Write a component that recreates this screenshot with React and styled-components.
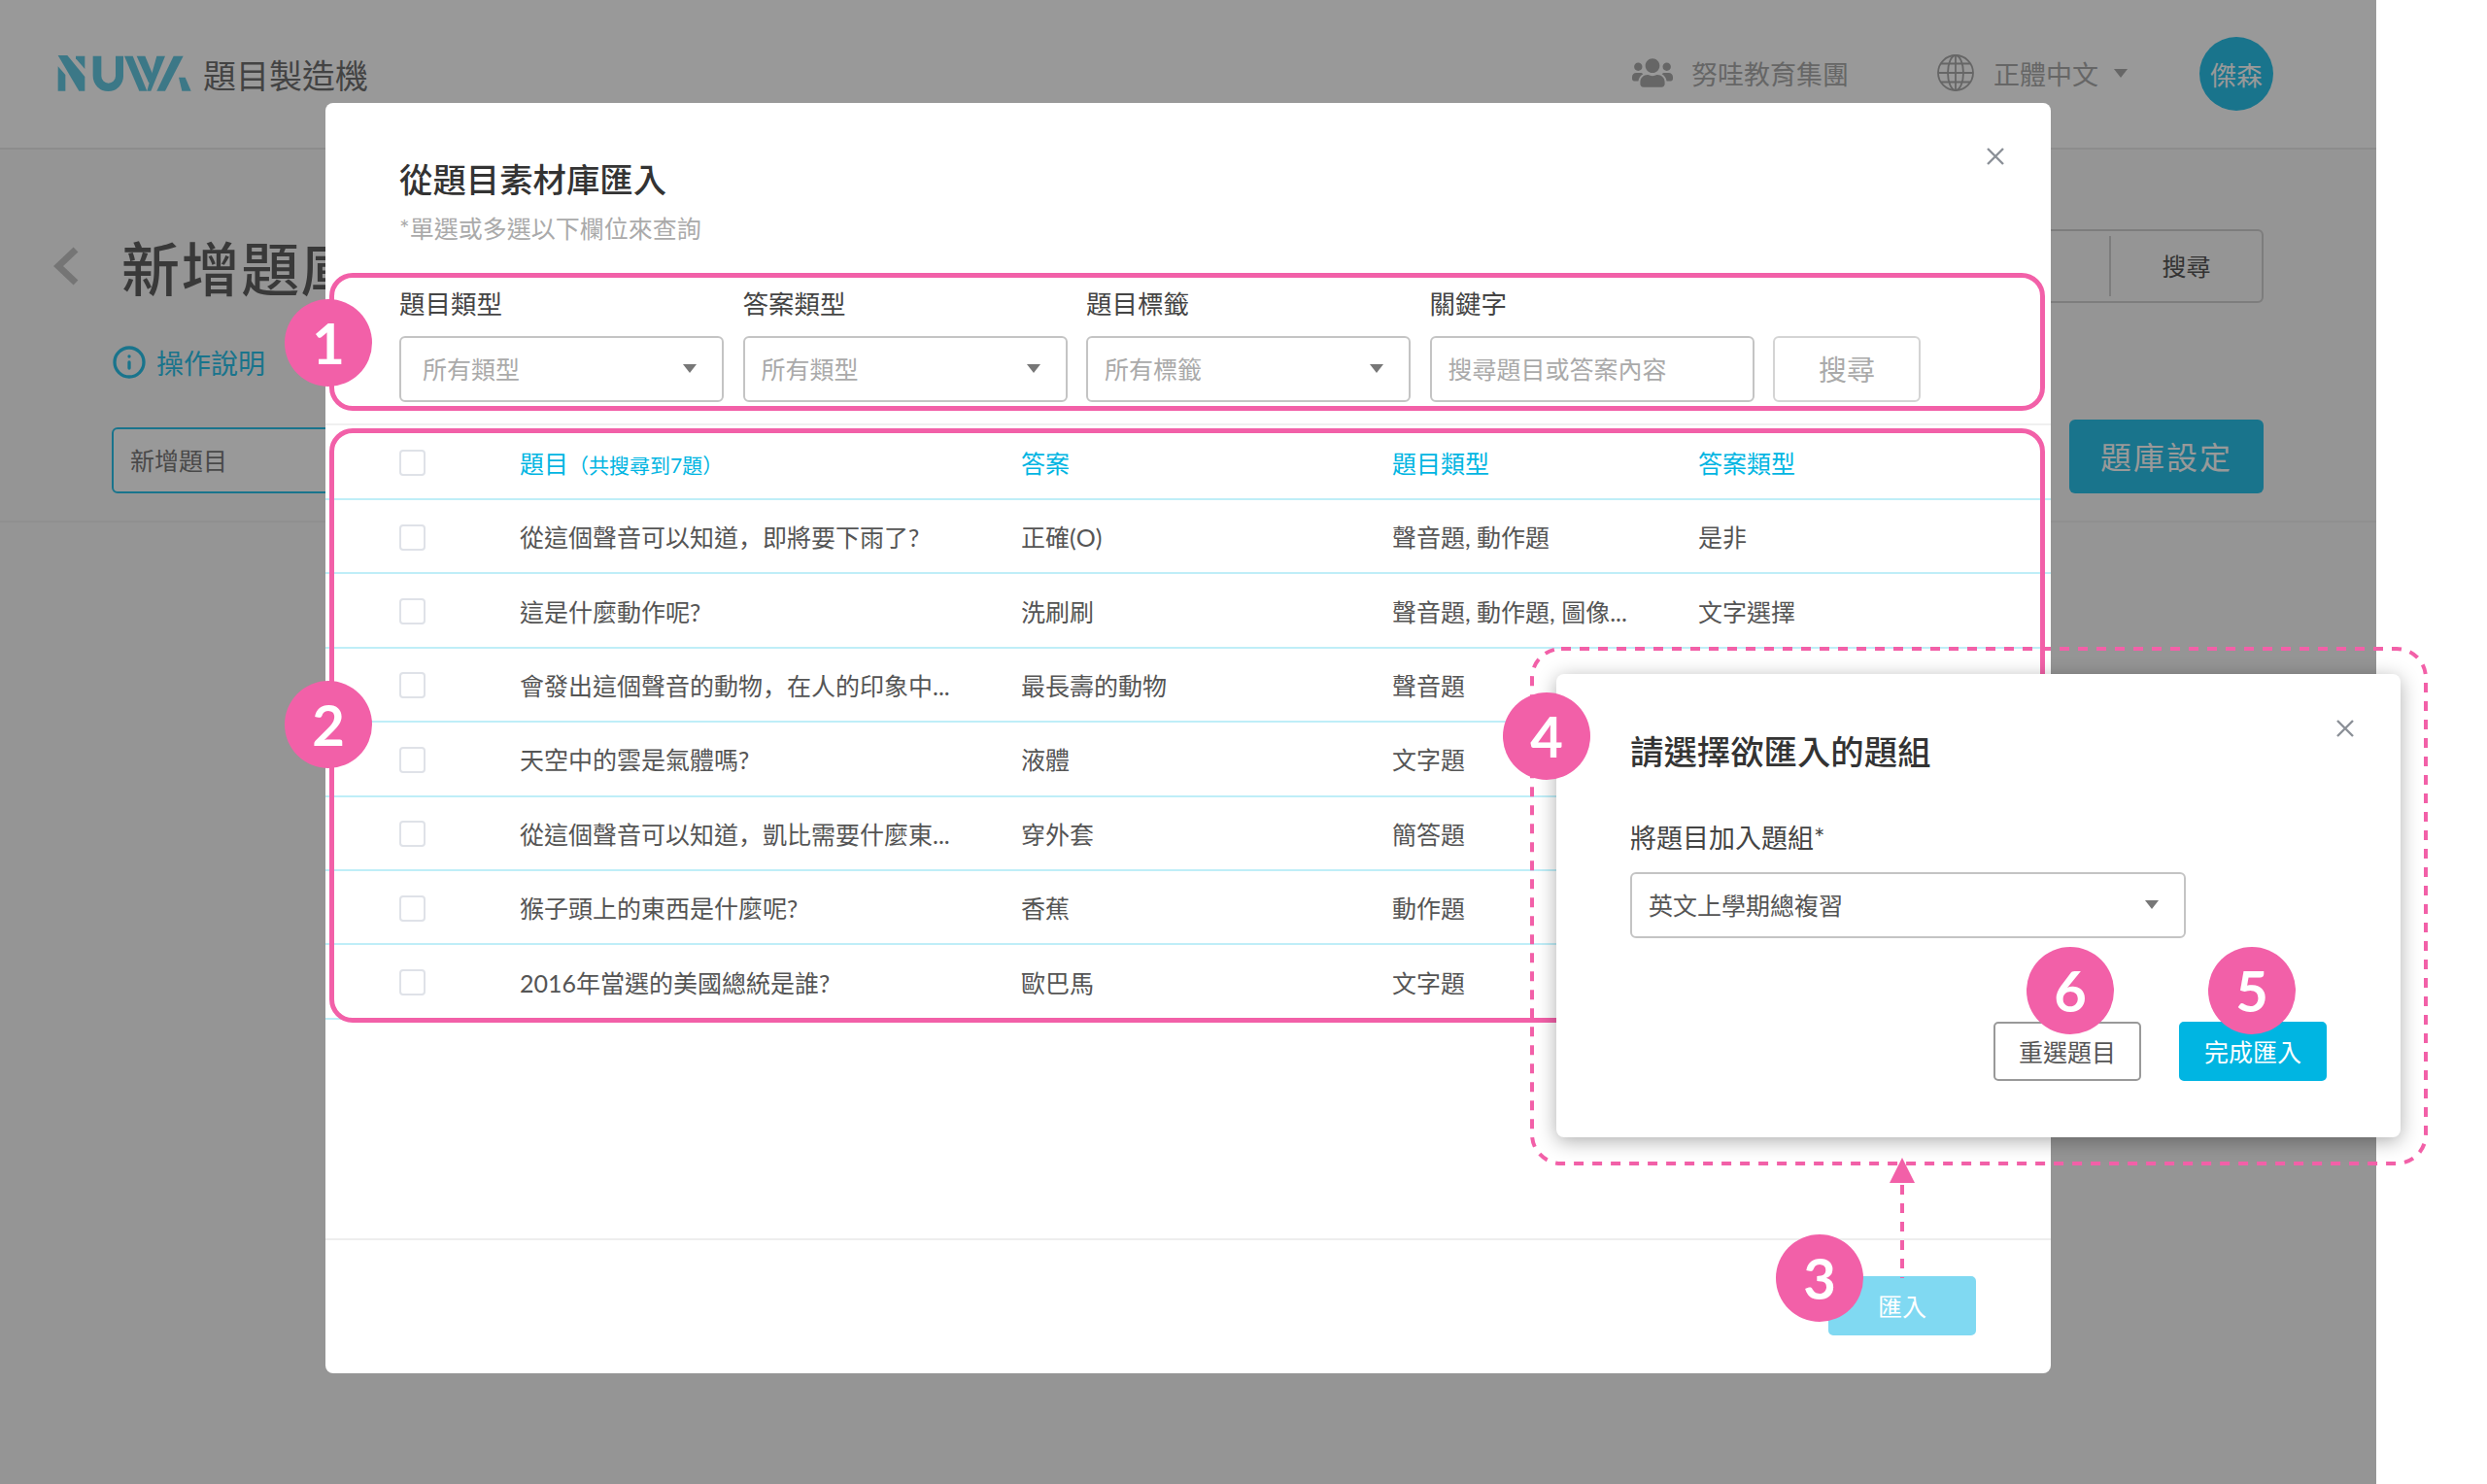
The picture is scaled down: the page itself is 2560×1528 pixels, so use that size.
import React from "react";
import styled, { createGlobalStyle } from "styled-components";
import { FaUsers } from "react-icons/fa";
import { Info } from "lucide-react";

const PINK = "#f260a8";
const CYAN = "#00b5e2";
const TEAL = "#2bc2ea";

const GlobalStyle = createGlobalStyle`
  html, body {
    margin: 0;
    background: #fff;
    overflow: hidden;
  }
  * {
    box-sizing: border-box;
  }
  body {
    font-family: "Lato", "Noto Sans CJK TC", sans-serif;
  }
`;

const Stage = styled.div`
  position: relative;
  width: 2560px;
  height: 1528px;
  overflow: hidden;
`;

const Page = styled.div`
  position: relative;
  width: 2446px;
  height: 1528px;
  background: #f8f8f8;
`;

const Backdrop = styled.div`
  position: absolute;
  inset: 0;
  background: rgba(0, 0, 0, 0.4);
`;

const Header = styled.header`
  display: flex;
  align-items: center;
  justify-content: space-between;
  height: 154px;
  padding: 0 106px 0 59px;
  background: #fff;
  border-bottom: 2px solid #eaeaea;
`;

const Brand = styled.div`
  display: flex;
  align-items: center;
  gap: 10px;
  font-size: 34px;
  color: #707070;
`;

const HeaderRight = styled.div`
  display: flex;
  align-items: center;
  font-size: 27px;
  color: #aaa;
`;

const HeaderItem = styled.div`
  display: flex;
  align-items: center;
  gap: 19px;
  margin-right: ${(p) => p.$after || 0}px;
  padding-bottom: 2px;
  white-space: nowrap;
`;

const Avatar = styled.div`
  display: flex;
  align-items: center;
  justify-content: center;
  width: 76px;
  height: 76px;
  border-radius: 50%;
  background: ${TEAL};
  color: #fff;
  font-size: 27px;
`;

const Caret = styled.span`
  display: block;
  width: 0;
  height: 0;
  margin-left: ${(p) => p.$shift || 0}px;
  border-left: ${(p) => p.$size || 7.5}px solid transparent;
  border-right: ${(p) => p.$size || 7.5}px solid transparent;
  border-top: ${(p) => (p.$size || 7.5) * 1.3}px solid ${(p) => p.$color || "#777"};
`;

const Content = styled.section`
  padding: 82px 116px 28px 55px;
  border-bottom: 2px solid #f0f0f0;
`;

const TitleRow = styled.div`
  display: flex;
  align-items: center;
  justify-content: space-between;
  height: 76px;
`;

const TitleLeft = styled.div`
  display: flex;
  align-items: center;
  gap: 44px;
`;

const PageTitle = styled.h1`
  margin: -2px 0 0;
  font-size: 60px;
  font-weight: 500;
  letter-spacing: 1.6px;
  color: #606060;
`;

const SearchBox = styled.div`
  display: flex;
  align-items: center;
  width: 700px;
  height: 76px;
  border: 2px solid #d0d0d0;
  border-radius: 6px;
`;

const SearchField = styled.div`
  flex: 1;
  height: 62px;
  border-right: 2px solid #d0d0d0;
`;

const SearchLabel = styled.div`
  width: 155px;
  margin-top: -2px;
  text-align: center;
  font-size: 25px;
  color: #555;
`;

const HelpRow = styled.div`
  display: flex;
  align-items: center;
  gap: 10px;
  height: 40px;
  margin: 41px 0 0 60px;
  font-size: 28px;
  color: ${TEAL};
`;

const ToolRow = styled.div`
  display: flex;
  align-items: center;
  justify-content: space-between;
  height: 76px;
  margin: 39px 0 0 60px;
`;

const NameInput = styled.div`
  display: flex;
  align-items: center;
  width: 700px;
  height: 68px;
  margin-top: 7px;
  padding: 0 0 2px 17px;
  border: 2px solid ${TEAL};
  border-radius: 6px;
  background: #fff;
  font-size: 25px;
  color: #7a7a7a;
`;

const SettingButton = styled.div`
  display: flex;
  align-items: center;
  justify-content: center;
  width: 200px;
  height: 76px;
  padding-bottom: 2px;
  border-radius: 6px;
  background: ${TEAL};
  color: #fff;
  font-size: 32px;
  letter-spacing: 2px;
`;

const Modal = styled.div`
  position: absolute;
  left: 335px;
  top: 106px;
  display: flex;
  flex-direction: column;
  width: 1776px;
  height: 1308px;
  border-radius: 8px;
  background: #fff;
`;

const CloseButton = styled.svg`
  position: absolute;
  right: ${(p) => p.$right}px;
  top: ${(p) => p.$top}px;
  width: 18px;
  height: 18px;
`;

const ModalHead = styled.div`
  height: 175px;
  padding: 55px 76px 0;
`;

const ModalTitle = styled.h2`
  margin: 0;
  font-size: 34.4px;
  line-height: 48px;
  font-weight: 500;
  color: #333;
`;

const ModalHint = styled.p`
  margin: 8px 0 0;
  font-size: 25px;
  line-height: 36px;
  color: #aaa;
`;

const Filters = styled.div`
  display: flex;
  align-items: flex-end;
  gap: 19.5px;
  height: 157px;
  padding: 15px 76px 22px;
  border-bottom: 2px solid #f0f0f0;
`;

const Field = styled.div`
  display: flex;
  flex-direction: column;
  gap: 15px;
  width: 334px;
`;

const FieldLabel = styled.label`
  font-size: 26.5px;
  line-height: 36px;
  color: #444;
`;

const SelectBox = styled.div`
  display: flex;
  align-items: center;
  justify-content: space-between;
  width: ${(p) => p.$width || 334}px;
  height: 68px;
  padding: 0 26px 2px ${(p) => p.$pad || 22}px;
  border: 2px solid #c4c4c4;
  border-radius: 6px;
  font-size: 25px;
  color: ${(p) => p.$color || "#aaa"};
`;

const SearchButton = styled.div`
  display: flex;
  align-items: center;
  justify-content: center;
  width: 152px;
  height: 68px;
  padding-bottom: 2px;
  border: 2px solid #d4d4d4;
  border-radius: 6px;
  font-size: 29px;
  color: #aaa;
`;

const Table = styled.div`
  flex: 1;
`;

const Row = styled.div`
  display: grid;
  grid-template-columns: 124px 516px 382px 315px 1fr;
  align-items: center;
  height: ${(p) => (p.$head ? 77 : 76.4)}px;
  padding-left: 76px;
  border-bottom: 2px solid #bfeef8;
  font-size: 25px;
  color: ${(p) => (p.$head ? CYAN : "#555")};
  white-space: nowrap;
`;

const Check = styled.span`
  display: block;
  width: 27px;
  height: 27px;
  margin-top: 2px;
  border: 2px solid #dfe2e8;
  border-radius: 4px;
`;

const Count = styled.span`
  font-size: 21px;
`;

const Comma = styled.span`
  font-family: "Noto Sans CJK SC", sans-serif;
`;

const ModalFoot = styled.div`
  display: flex;
  justify-content: flex-end;
  height: 139px;
  padding: 37px 77px 0 0;
  border-top: 2px solid #eee;
`;

const ActionButton = styled.div`
  display: flex;
  align-items: center;
  justify-content: center;
  width: 152px;
  height: 61px;
  padding-bottom: 2px;
  border: 2px solid ${(p) => (p.$ghost ? "#999" : p.$bg)};
  border-radius: 5px;
  background: ${(p) => (p.$ghost ? "#fff" : p.$bg)};
  color: ${(p) => (p.$ghost ? "#555" : "#fff")};
  font-size: 25px;
`;

const PickModal = styled.div`
  position: absolute;
  left: 1602px;
  top: 694px;
  width: 869px;
  height: 477px;
  padding: 56px 76px 0;
  border-radius: 8px;
  background: #fff;
  box-shadow: 0 4px 20px rgba(0, 0, 0, 0.32);
`;

const PickLabel = styled.div`
  margin: 47px 0 17px;
  font-size: 27px;
  line-height: 36px;
  color: #444;
`;

const PickActions = styled.div`
  display: flex;
  justify-content: flex-end;
  gap: 39px;
  margin-top: 86px;
`;

const Highlight = styled.div`
  position: absolute;
  left: 339px;
  top: ${(p) => p.$top}px;
  width: 1766px;
  height: ${(p) => p.$height}px;
  border: 5px solid ${PINK};
  border-radius: 24px;
`;

const Overlay = styled.svg`
  position: absolute;
  left: 0;
  top: 0;
  width: 2560px;
  height: 1528px;
  pointer-events: none;
`;

const Badge = styled.div`
  position: absolute;
  left: ${(p) => p.$x - 45}px;
  top: ${(p) => p.$y - 45}px;
  display: flex;
  align-items: center;
  justify-content: center;
  width: 90px;
  height: 90px;
  padding-bottom: 2px;
  border-radius: 50%;
  background: ${PINK};
  color: #fff;
  font-family: "Lato", sans-serif;
  font-size: 58px;
  font-weight: 700;
`;

const questions = [
  ["從這個聲音可以知道，即將要下雨了?", "正確(O)", "聲音題, 動作題", "是非"],
  ["這是什麼動作呢?", "洗刷刷", "聲音題, 動作題, 圖像...", "文字選擇"],
  ["會發出這個聲音的動物，在人的印象中...", "最長壽的動物", "聲音題"],
  ["天空中的雲是氣體嗎?", "液體", "文字題"],
  ["從這個聲音可以知道，凱比需要什麼東...", "穿外套", "簡答題"],
  ["猴子頭上的東西是什麼呢?", "香蕉", "動作題"],
  ["2016年當選的美國總統是誰?", "歐巴馬", "文字題"],
];

const Logo = () => (
  <svg width="140" height="40" viewBox="55 55 420 120">
    <g fill="#2bb4d6" opacity="0.72">
      <polygon points="57,92 80,118 80,168 57,168" />
      <polygon points="57,58 86,58 140,124 140,168 122,168" />
      <polygon points="112,60 140,60 140,100 112,68" />
      <path d="M165 60h26v62a22 22 0 0 0 44 0V60h24v62a47 47 0 0 1-94 0z" />
      <polygon points="262,60 288,60 332,168 308,168" />
      <polygon points="300,60 326,60 350,118 338,144" />
      <polygon points="332,168 362,60 388,60 344,168" />
      <polygon points="362,168 414,60 444,60 388,168" />
      <polygon points="430,126 450,126 468,168 440,168" />
    </g>
  </svg>
);

const Globe = () => (
  <svg width="40" height="40" viewBox="0 0 40 40" fill="none" stroke="#aaa" strokeWidth="1.8">
    <circle cx="20" cy="20" r="18" />
    <ellipse cx="20" cy="20" rx="8" ry="18" />
    <path d="M20 2v36M2 20h36M5 10.5h30M5 29.5h30" />
  </svg>
);

const Chevron = () => (
  <svg width="26" height="40" viewBox="0 0 26 40" fill="none" stroke="#c4c4c4" strokeWidth="7">
    <polyline points="23,3 5,20 23,37" />
  </svg>
);

const CloseIcon = ({ right, top }) => (
  <CloseButton $right={right} $top={top} viewBox="0 0 18 18" fill="none" stroke="#8b9097" strokeWidth="2.4">
    <path d="M1 1l16 16M17 1L1 17" />
  </CloseButton>
);

const QuestionTitle = ({ text }) => {
  const [before, after] = text.split("，");
  if (after === undefined) return <div>{text}</div>;
  return (
    <div>
      {before}
      <Comma>，</Comma>
      {after}
    </div>
  );
};

export default function App() {
  return (
    <Stage>
      <GlobalStyle />
      <Page>
        <Header>
          <Brand>
            <Logo />
            題目製造機
          </Brand>
          <HeaderRight>
            <HeaderItem $after={90}>
              <FaUsers size={42} color="#aaa" />
              努哇教育集團
            </HeaderItem>
            <HeaderItem $after={74}>
              <Globe />
              正體中文
              <Caret $size={7} $color="#aaa" $shift={-3} />
            </HeaderItem>
            <Avatar>傑森</Avatar>
          </HeaderRight>
        </Header>
        <Content>
          <TitleRow>
            <TitleLeft>
              <Chevron />
              <PageTitle>新增題庫</PageTitle>
            </TitleLeft>
            <SearchBox>
              <SearchField />
              <SearchLabel>搜尋</SearchLabel>
            </SearchBox>
          </TitleRow>
          <HelpRow>
            <Info size={36} strokeWidth={2.2} />
            操作說明
          </HelpRow>
          <ToolRow>
            <NameInput>新增題目</NameInput>
            <SettingButton>題庫設定</SettingButton>
          </ToolRow>
        </Content>
        <Backdrop />
      </Page>

      <Modal>
        <CloseIcon right={48} top={46} />
        <ModalHead>
          <ModalTitle>從題目素材庫匯入</ModalTitle>
          <ModalHint>*單選或多選以下欄位來查詢</ModalHint>
        </ModalHead>
        <Filters>
          <Field>
            <FieldLabel>題目類型</FieldLabel>
            <SelectBox>
              所有類型
              <Caret />
            </SelectBox>
          </Field>
          <Field>
            <FieldLabel>答案類型</FieldLabel>
            <SelectBox $pad={17}>
              所有類型
              <Caret />
            </SelectBox>
          </Field>
          <Field>
            <FieldLabel>題目標籤</FieldLabel>
            <SelectBox $pad={17}>
              所有標籤
              <Caret />
            </SelectBox>
          </Field>
          <Field>
            <FieldLabel>關鍵字</FieldLabel>
            <SelectBox $pad={17}>搜尋題目或答案內容</SelectBox>
          </Field>
          <SearchButton>搜尋</SearchButton>
        </Filters>
        <Table>
          <Row $head>
            <Check />
            <div>
              題目<Count>（共搜尋到7題）</Count>
            </div>
            <div>答案</div>
            <div>題目類型</div>
            <div>答案類型</div>
          </Row>
          {questions.map(([title, answer, type, answerType]) => (
            <Row key={title}>
              <Check />
              <QuestionTitle text={title} />
              <div>{answer}</div>
              <div>{type}</div>
              <div>{answerType}</div>
            </Row>
          ))}
        </Table>
        <ModalFoot>
          <ActionButton $bg="#80d9f2">匯入</ActionButton>
        </ModalFoot>
      </Modal>

      <Highlight $top={281} $height={142} />
      <Highlight $top={441} $height={612} />

      <PickModal>
        <CloseIcon right={48} top={47} />
        <ModalTitle>請選擇欲匯入的題組</ModalTitle>
        <PickLabel>將題目加入題組*</PickLabel>
        <SelectBox $width={572} $pad={17} $color="#555">
          英文上學期總複習
          <Caret />
        </SelectBox>
        <PickActions>
          <ActionButton $ghost>重選題目</ActionButton>
          <ActionButton $bg={CYAN}>完成匯入</ActionButton>
        </PickActions>
      </PickModal>

      <Overlay viewBox="0 0 2560 1528" fill="none">
        <rect x="1577" y="668" width="920" height="530" rx="30" stroke={PINK} strokeWidth="4" strokeDasharray="10 9" />
        <path d="M1958 1220V1316" stroke={PINK} strokeWidth="4" strokeDasharray="10 9" />
        <polygon points="1958,1192 1971,1218 1945,1218" fill={PINK} />
      </Overlay>

      <Badge $x={338} $y={353}>1</Badge>
      <Badge $x={338} $y={746}>2</Badge>
      <Badge $x={1873} $y={1316}>3</Badge>
      <Badge $x={1592} $y={758}>4</Badge>
      <Badge $x={2318} $y={1020}>5</Badge>
      <Badge $x={2131} $y={1020}>6</Badge>
    </Stage>
  );
}
